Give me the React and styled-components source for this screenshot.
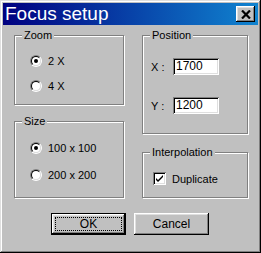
import styled, { createGlobalStyle } from "styled-components";

const Global = createGlobalStyle`
  html, body {
    margin: 0;
    padding: 0;
    background: #c0c0c0;
  }
  * {
    box-sizing: border-box;
  }
`;

const Window = styled.div`
  width: 261px;
  height: 253px;
  background: #c0c0c0;
  font-family: "Liberation Sans", Arial, sans-serif;
  font-size: 11px;
  color: #000;
  padding: 3px;
  box-shadow: inset -1px -1px #000, inset 1px 1px #dfdfdf,
    inset -2px -2px #808080, inset 2px 2px #fff;
  display: flex;
  flex-direction: column;
`;

const TitleBar = styled.div`
  height: 22px;
  background: linear-gradient(to right, #000080, #1084d0);
  display: flex;
  align-items: center;
  justify-content: space-between;
  padding: 0 3px 0 2px;
`;

const Title = styled.span`
  color: #fff;
  font-size: 19px;
  line-height: 22px;
`;

const CloseButton = styled.div`
  width: 19px;
  height: 16px;
  background: #c0c0c0;
  display: flex;
  align-items: center;
  justify-content: center;
  box-shadow: inset -1px -1px #000, inset 1px 1px #fff,
    inset -2px -2px #808080, inset 2px 2px #dfdfdf;
`;

const Content = styled.div`
  padding: 10px 10px 0 11px;
  display: grid;
  grid-template-columns: 110px 106px;
  column-gap: 18px;
`;

const Column = styled.div`
  display: flex;
  flex-direction: column;
  gap: ${(p) => p.$gap}px;
`;

const Group = styled.div`
  position: relative;
  height: ${(p) => p.$h}px;
  border: 1px solid #808080;
  box-shadow: inset 1px 1px #fff, 1px 1px #fff;
  padding: ${(p) => p.$pad};
  display: flex;
  flex-direction: column;
  gap: ${(p) => p.$gap || 0}px;
`;

const Legend = styled.span`
  position: absolute;
  top: -7px;
  left: 7px;
  padding: 0 2px;
  background: #c0c0c0;
  line-height: 13px;
`;

const OptionRow = styled.label`
  display: flex;
  align-items: center;
  height: 13px;
  gap: 6px;
`;

const RadioOuter = styled.span`
  width: 12px;
  height: 12px;
  border-radius: 50%;
  border: 1px solid;
  border-color: #808080 #fff #fff #808080;
  display: flex;
`;

const RadioInner = styled.span`
  flex: 1;
  border-radius: 50%;
  border: 1px solid;
  border-color: #000 #dfdfdf #dfdfdf #000;
  background: #fff;
  display: flex;
  align-items: center;
  justify-content: center;
`;

const Dot = styled.span`
  width: 4px;
  height: 4px;
  border-radius: 50%;
  background: #000;
`;

const FieldRow = styled.div`
  display: flex;
  align-items: center;
  height: 17px;
`;

const FieldLabel = styled.span`
  width: 22px;
`;

const TextBox = styled.div`
  width: 46px;
  height: 17px;
  background: #fff;
  padding: 0 0 0 3px;
  line-height: 17px;
  font-size: 12px;
  box-shadow: inset 1px 1px #808080, inset -1px -1px #fff,
    inset 2px 2px #000, inset -2px -2px #dfdfdf;
`;

const CheckBox = styled.span`
  width: 13px;
  height: 13px;
  background: #fff;
  display: flex;
  align-items: center;
  justify-content: center;
  box-shadow: inset 1px 1px #808080, inset -1px -1px #fff,
    inset 2px 2px #000, inset -2px -2px #dfdfdf;
`;

const ButtonRow = styled.div`
  display: flex;
  justify-content: center;
  gap: 8px;
  margin-top: 15px;
  padding-right: 1px;
`;

const Button = styled.div`
  width: 75px;
  height: 22px;
  display: flex;
  align-items: center;
  justify-content: center;
  position: relative;
  font-size: 12px;
  box-shadow: ${(p) =>
    p.$default
      ? "inset 0 0 0 1px #000, inset -2px -2px #000, inset 2px 2px #fff, inset -3px -3px #808080, inset 3px 3px #dfdfdf"
      : "inset -1px -1px #000, inset 1px 1px #fff, inset -2px -2px #808080, inset 2px 2px #dfdfdf"};
`;

const Focus = styled.span`
  position: absolute;
  inset: 4px;
  border: 1px dotted #000;
`;

function Radio({ checked, children }) {
  return (
    <OptionRow>
      <RadioOuter>
        <RadioInner>{checked && <Dot />}</RadioInner>
      </RadioOuter>
      {children}
    </OptionRow>
  );
}

export default function App() {
  return (
    <>
      <Global />
      <Window>
        <TitleBar>
          <Title>Focus setup</Title>
          <CloseButton>
            <svg width="10" height="9" viewBox="0 0 10 9">
              <path d="M1 0.5 L9 8.5 M9 0.5 L1 8.5" stroke="#000" strokeWidth="2.2" />
            </svg>
          </CloseButton>
        </TitleBar>
        <Content>
          <Column $gap={16}>
            <Group $h={70} $pad="18px 0 0 15px" $gap={12}>
              <Legend>Zoom</Legend>
              <Radio checked>2 X</Radio>
              <Radio>4 X</Radio>
            </Group>
            <Group $h={77} $pad="19px 0 0 15px" $gap={14}>
              <Legend>Size</Legend>
              <Radio checked>100 x 100</Radio>
              <Radio>200 x 200</Radio>
            </Group>
          </Column>
          <Column $gap={18}>
            <Group $h={99} $pad="22px 0 0 8px" $gap={22}>
              <Legend>Position</Legend>
              <FieldRow>
                <FieldLabel>X :</FieldLabel>
                <TextBox>1700</TextBox>
              </FieldRow>
              <FieldRow>
                <FieldLabel>Y :</FieldLabel>
                <TextBox>1200</TextBox>
              </FieldRow>
            </Group>
            <Group $h={46} $pad="19px 0 0 10px">
              <Legend>Interpolation</Legend>
              <OptionRow>
                <CheckBox>
                  <svg width="7" height="7" viewBox="0 0 7 7">
                    <path d="M0 3 L2 5 L7 0 L7 2 L2 7 L0 5 Z" fill="#000" />
                  </svg>
                </CheckBox>
                Duplicate
              </OptionRow>
            </Group>
          </Column>
        </Content>
        <ButtonRow>
          <Button $default>
            <Focus />
            OK
          </Button>
          <Button>Cancel</Button>
        </ButtonRow>
      </Window>
    </>
  );
}
